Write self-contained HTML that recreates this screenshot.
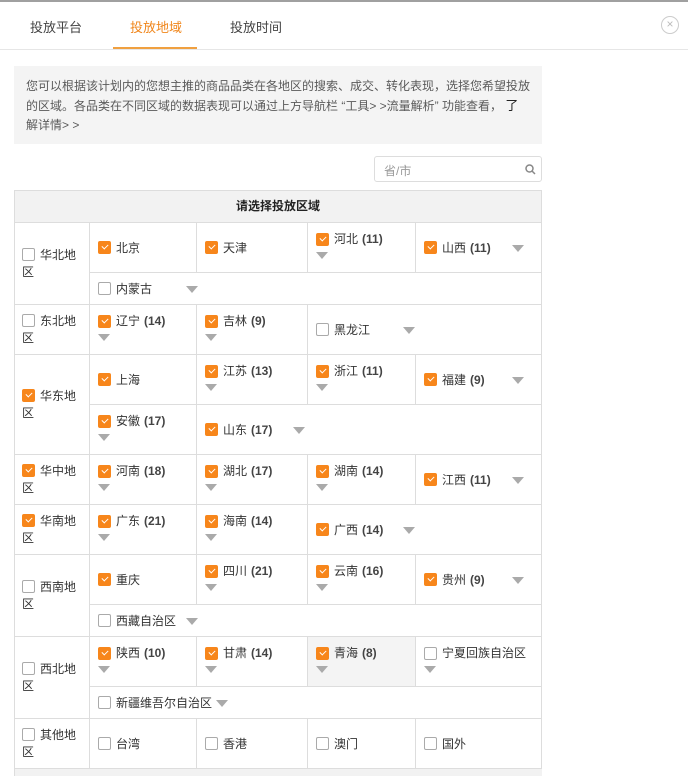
<!DOCTYPE html>
<html><head><meta charset="utf-8"><style>
*{box-sizing:border-box;margin:0;padding:0}
body{width:688px;height:776px;overflow:hidden;background:#fff;font-family:"Liberation Sans","Noto Sans CJK SC",sans-serif;font-size:12px;color:#333;position:relative}
.top{position:absolute;left:0;top:0;width:688px;height:2px;background:#a0a0a0}
.tab{position:absolute;top:17px;font-size:13px;color:#444}
.tab.a{color:#f0861b}
.ul{position:absolute;left:113px;top:47px;width:84px;height:2px;background:#f0a040}
.hl{position:absolute;left:0;top:49px;width:688px;height:1px;background:#e6e6e6}
.close{position:absolute;left:661px;top:16px;width:18px;height:18px;border:1px solid #ccc;border-radius:50%;color:#bbb;font-size:12px;line-height:15px;text-align:center}
.info{position:absolute;left:14px;top:66px;width:528px;height:78px;background:#f4f4f4;padding:11px 12px 0 12px;line-height:19px;color:#5a5a5a;font-size:12px}
.srch{position:absolute;left:374px;top:156px;width:168px;height:26px;border:1px solid #ddd;border-radius:3px;color:#999;padding:5px 0 0 9px;font-size:12px}
.tbl{position:absolute;left:14px;top:190px;width:528px;height:586px;border-right:1px solid #ddd}
.hd{position:absolute;left:14px;top:190px;width:528px;height:33px;background:#f2f2f2;border:1px solid #ddd;font-weight:bold;text-align:center;line-height:31px;color:#222}
.c{position:absolute;border-left:1px solid #ddd;border-top:1px solid #ddd}
.t{position:absolute;left:8px;white-space:nowrap;display:flex;align-items:center;line-height:16px}
.m{top:50%;transform:translateY(-50%)}
.w{top:8px}
.k{display:inline-block;width:13px;height:13px;border:1px solid #aaa;border-radius:2px;margin-right:5px;position:relative;background:#fff;flex:none}
.k.on{background:#f7861b;border-color:#f7861b}
.k.on:after{content:"";position:absolute;left:3px;top:2px;width:5px;height:3px;border-left:1.5px solid #fff;border-bottom:1.5px solid #fff;transform:rotate(-45deg)}
b{margin-left:4px;color:#444}
.ar{position:absolute;width:0;height:0;border-left:6px solid transparent;border-right:6px solid transparent;border-top:7px solid #aaa}
.aw{left:8px;top:29px}
.am{top:50%;margin-top:-3px}
.r .t{left:7px;top:50%;transform:translateY(-50%);white-space:normal;width:60px;display:block;line-height:17px}
.r .k{vertical-align:-2px}
.foot{position:absolute;left:14px;top:768px;width:528px;height:8px;background:#f2f2f2;border-top:1px solid #ddd;border-left:1px solid #ddd}
</style></head><body>
<div class="top"></div>
<div class="tab" style="left:30px">投放平台</div>
<div class="tab a" style="left:130px">投放地域</div>
<div class="tab" style="left:230px">投放时间</div>
<div class="ul"></div><div class="hl"></div>
<div class="close">×</div>
<div class="info">您可以根据该计划内的您想主推的商品品类在各地区的搜索、成交、转化表现，选择您希望投放的区域。各品类在不同区域的数据表现可以通过上方导航栏 “工具&gt; &gt;流量解析” 功能查看， <span style="color:#222;font-size:13px">了</span>解详情&gt; &gt;</div>
<div class="srch">省/市<svg style="position:absolute;right:5px;top:7px" width="11" height="11" viewBox="0 0 11 11"><circle cx="4.5" cy="4.5" r="3.5" fill="none" stroke="#888" stroke-width="1.5"/><path d="M7 7l3 3" stroke="#888" stroke-width="1.5"/></svg></div>
<div class="tbl"></div>
<div class="hd">请选择投放区域</div>

<div class="c r" style="left:14px;top:222px;width:75px;height:82px"><div class="t"><i class="k"></i>华北地区</div></div>
<div class="c r" style="left:14px;top:304px;width:75px;height:50px"><div class="t"><i class="k"></i>东北地区</div></div>
<div class="c r" style="left:14px;top:354px;width:75px;height:100px"><div class="t"><i class="k on"></i>华东地区</div></div>
<div class="c r" style="left:14px;top:454px;width:75px;height:50px"><div class="t"><i class="k on"></i>华中地区</div></div>
<div class="c r" style="left:14px;top:504px;width:75px;height:50px"><div class="t"><i class="k on"></i>华南地区</div></div>
<div class="c r" style="left:14px;top:554px;width:75px;height:82px"><div class="t"><i class="k"></i>西南地区</div></div>
<div class="c r" style="left:14px;top:636px;width:75px;height:82px"><div class="t"><i class="k"></i>西北地区</div></div>
<div class="c r" style="left:14px;top:718px;width:75px;height:50px"><div class="t"><i class="k"></i>其他地区</div></div>

<div class="c" style="left:89px;top:222px;width:107px;height:50px"><div class="t m"><i class="k on"></i>北京</div></div>
<div class="c" style="left:196px;top:222px;width:111px;height:50px"><div class="t m"><i class="k on"></i>天津</div></div>
<div class="c" style="left:307px;top:222px;width:108px;height:50px"><div class="t w"><i class="k on"></i>河北<b>(11)</b></div><i class="ar aw"></i></div>
<div class="c" style="left:415px;top:222px;width:126px;height:50px"><div class="t m"><i class="k on"></i>山西<b>(11)</b></div><i class="ar am" style="left:96px"></i></div>
<div class="c" style="left:89px;top:272px;width:452px;height:32px"><div class="t m"><i class="k"></i>内蒙古</div><i class="ar am" style="left:96px"></i></div>
<div class="c" style="left:89px;top:304px;width:107px;height:50px"><div class="t w"><i class="k on"></i>辽宁<b>(14)</b></div><i class="ar aw"></i></div>
<div class="c" style="left:196px;top:304px;width:111px;height:50px"><div class="t w"><i class="k on"></i>吉林<b>(9)</b></div><i class="ar aw"></i></div>
<div class="c" style="left:307px;top:304px;width:234px;height:50px"><div class="t m"><i class="k"></i>黑龙江</div><i class="ar am" style="left:95px"></i></div>
<div class="c" style="left:89px;top:354px;width:107px;height:50px"><div class="t m"><i class="k on"></i>上海</div></div>
<div class="c" style="left:196px;top:354px;width:111px;height:50px"><div class="t w"><i class="k on"></i>江苏<b>(13)</b></div><i class="ar aw"></i></div>
<div class="c" style="left:307px;top:354px;width:108px;height:50px"><div class="t w"><i class="k on"></i>浙江<b>(11)</b></div><i class="ar aw"></i></div>
<div class="c" style="left:415px;top:354px;width:126px;height:50px"><div class="t m"><i class="k on"></i>福建<b>(9)</b></div><i class="ar am" style="left:96px"></i></div>
<div class="c" style="left:89px;top:404px;width:107px;height:50px"><div class="t w"><i class="k on"></i>安徽<b>(17)</b></div><i class="ar aw"></i></div>
<div class="c" style="left:196px;top:404px;width:345px;height:50px"><div class="t m"><i class="k on"></i>山东<b>(17)</b></div><i class="ar am" style="left:96px"></i></div>
<div class="c" style="left:89px;top:454px;width:107px;height:50px"><div class="t w"><i class="k on"></i>河南<b>(18)</b></div><i class="ar aw"></i></div>
<div class="c" style="left:196px;top:454px;width:111px;height:50px"><div class="t w"><i class="k on"></i>湖北<b>(17)</b></div><i class="ar aw"></i></div>
<div class="c" style="left:307px;top:454px;width:108px;height:50px"><div class="t w"><i class="k on"></i>湖南<b>(14)</b></div><i class="ar aw"></i></div>
<div class="c" style="left:415px;top:454px;width:126px;height:50px"><div class="t m"><i class="k on"></i>江西<b>(11)</b></div><i class="ar am" style="left:96px"></i></div>
<div class="c" style="left:89px;top:504px;width:107px;height:50px"><div class="t w"><i class="k on"></i>广东<b>(21)</b></div><i class="ar aw"></i></div>
<div class="c" style="left:196px;top:504px;width:111px;height:50px"><div class="t w"><i class="k on"></i>海南<b>(14)</b></div><i class="ar aw"></i></div>
<div class="c" style="left:307px;top:504px;width:234px;height:50px"><div class="t m"><i class="k on"></i>广西<b>(14)</b></div><i class="ar am" style="left:95px"></i></div>
<div class="c" style="left:89px;top:554px;width:107px;height:50px"><div class="t m"><i class="k on"></i>重庆</div></div>
<div class="c" style="left:196px;top:554px;width:111px;height:50px"><div class="t w"><i class="k on"></i>四川<b>(21)</b></div><i class="ar aw"></i></div>
<div class="c" style="left:307px;top:554px;width:108px;height:50px"><div class="t w"><i class="k on"></i>云南<b>(16)</b></div><i class="ar aw"></i></div>
<div class="c" style="left:415px;top:554px;width:126px;height:50px"><div class="t m"><i class="k on"></i>贵州<b>(9)</b></div><i class="ar am" style="left:96px"></i></div>
<div class="c" style="left:89px;top:604px;width:452px;height:32px"><div class="t m"><i class="k"></i>西藏自治区</div><i class="ar am" style="left:96px"></i></div>
<div class="c" style="left:89px;top:636px;width:107px;height:50px"><div class="t w"><i class="k on"></i>陕西<b>(10)</b></div><i class="ar aw"></i></div>
<div class="c" style="left:196px;top:636px;width:111px;height:50px"><div class="t w"><i class="k on"></i>甘肃<b>(14)</b></div><i class="ar aw"></i></div>
<div class="c" style="left:307px;top:636px;width:108px;height:50px;background:#f4f4f4"><div class="t w"><i class="k on"></i>青海<b>(8)</b></div><i class="ar aw"></i></div>
<div class="c" style="left:415px;top:636px;width:126px;height:50px"><div class="t w"><i class="k"></i>宁夏回族自治区</div><i class="ar aw"></i></div>
<div class="c" style="left:89px;top:686px;width:452px;height:32px"><div class="t m"><i class="k"></i>新疆维吾尔自治区</div><i class="ar am" style="left:126px"></i></div>
<div class="c" style="left:89px;top:718px;width:107px;height:50px"><div class="t m"><i class="k"></i>台湾</div></div>
<div class="c" style="left:196px;top:718px;width:111px;height:50px"><div class="t m"><i class="k"></i>香港</div></div>
<div class="c" style="left:307px;top:718px;width:108px;height:50px"><div class="t m"><i class="k"></i>澳门</div></div>
<div class="c" style="left:415px;top:718px;width:126px;height:50px"><div class="t m"><i class="k"></i>国外</div></div>
<div class="foot"></div>
</body></html>
